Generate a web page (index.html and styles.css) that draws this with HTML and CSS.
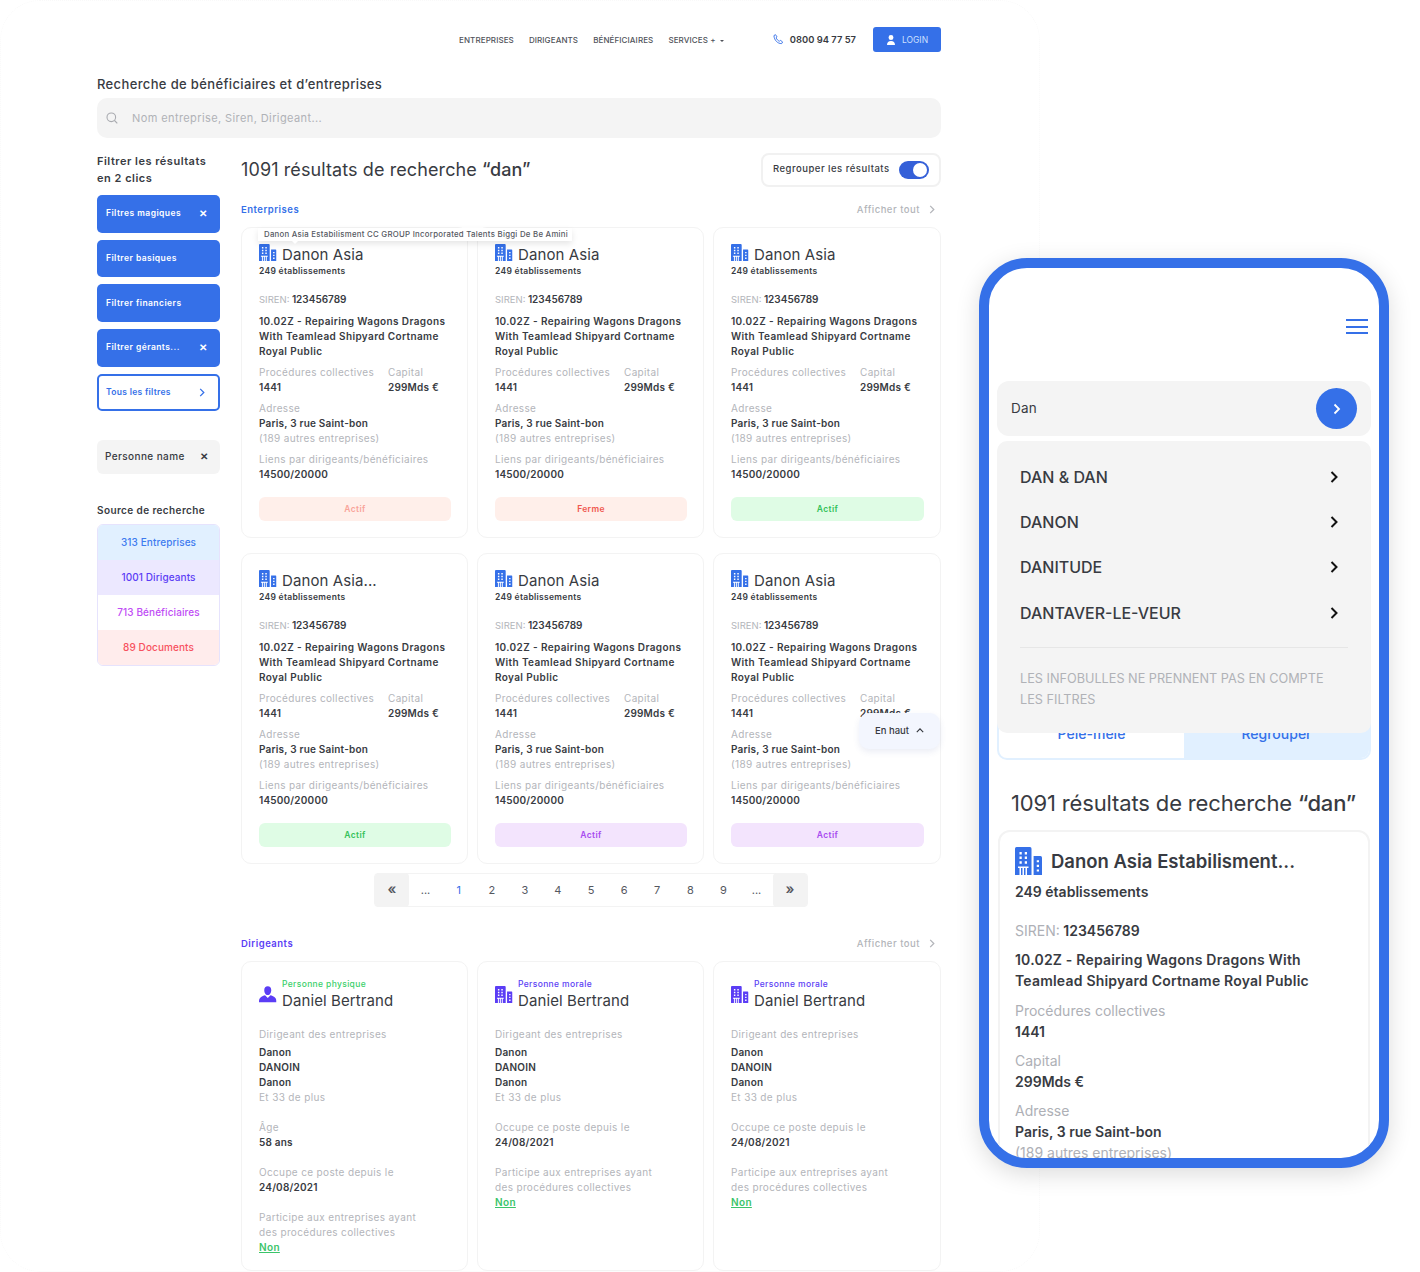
FILE: index.html
```html
<!DOCTYPE html>
<html lang="fr">
<head>
<meta charset="utf-8">
<title>Recherche de bénéficiaires et d'entreprises</title>
<link rel="stylesheet" href="styles.css">
</head>
<body>
<svg class="icon_defs" width="0" height="0">
	<symbol id="building" viewBox="0 0 18 17" preserveAspectRatio="none">
		<path fill="currentColor" d="M1 0h9a1 1 0 0 1 1 1v16H0V1a1 1 0 0 1 1-1zM12.400 5.500H17a1 1 0 0 1 1 1V17h-5.600z"/>
		<path fill="#fff" d="M3 3h1.500v1.500H3zM6.500 3H8v1.500H6.500zM3 5.800h1.500v1.500H3zM6.500 5.800H8v1.500H6.500zM3 8.600h1.500v1.500H3zM6.500 8.600H8v1.500H6.500zM2 11.800h7v1H8V17H7v-4.200H6V17H5v-4.200H4V17H3v-4.200H2zM14.500 8H16v1.300h-1.500zM14.500 10.800H16v1.300h-1.500zM14.500 13.600H16v1.300h-1.500z"/>
	</symbol>
	<symbol id="person" viewBox="0 0 18 17">
		<path fill="currentColor" d="M9 0c2.300 0 3.600 1.700 3.600 4 0 2.200-1.300 5-3.600 5S5.400 6.200 5.400 4C5.400 1.700 6.700 0 9 0zM6.200 9.200 9 12l2.800-2.800c3 .8 5.700 2 6.200 5.800v1.500H0V15c.5-3.800 3.200-5 6.200-5.800z"/>
	</symbol>
</svg>

<div class="frame_line"></div>

<div class="page">
	<div class="desktop">
		<div class="topbar">
			<a class="nav_link">Entreprises</a>
			<a class="nav_link">Dirigeants</a>
			<a class="nav_link">Bénéficiaires</a>
			<a class="nav_link">Services + <span class="caret"></span></a>
			<svg class="phone_icon" viewBox="0 0 12 12"><path fill="none" stroke="#3570e8" stroke-width="1" d="M1 1.800 2.700.7l1.700 2.500-1 1c.6 1.600 2 3 3.700 3.700l1-1 2.400 1.800-1.100 1.800C5 10.500 1.500 7 1 1.800z"/></svg>
			<span class="phone_nb">0800 94 77 57</span>
			<a class="login_bt">
				<svg viewBox="0 0 10 10" width="10" height="10"><path fill="#fff" d="M5 0a2.400 2.400 0 0 1 2.400 2.500A2.400 2.400 0 0 1 5 5a2.400 2.400 0 0 1-2.400-2.500A2.400 2.400 0 0 1 5 0zM1 10c0-2.500 1.500-4 4-4s4 1.500 4 4z"/></svg>
				Login
			</a>
		</div>

		<h1 class="page_title">Recherche de bénéficiaires et d’entreprises</h1>
		<div class="searchbar">
			<svg viewBox="0 0 12 12" width="12" height="12"><circle cx="5.300" cy="5.300" r="4.300" fill="none" stroke="#a9abb0" stroke-width="1.100"/><path d="m8.500 8.500 2.800 2.800" stroke="#a9abb0" stroke-width="1.100"/></svg>
			<span>Nom entreprise, Siren, Dirigeant...</span>
		</div>

		<div class="columns">
			<div class="sidebar">
				<h3 class="filter_title">Filtrer les résultats<br>en 2 clics</h3>
				<div class="filter_list">
					<a class="filter_bt">Filtres magiques <span class="cross">✕</span></a>
					<a class="filter_bt">Filtrer basiques</a>
					<a class="filter_bt">Filtrer financiers</a>
					<a class="filter_bt">Filtrer gérants... <span class="cross">✕</span></a>
					<a class="filter_bt filter_all">Tous les filtres <svg class="chev" viewBox="0 0 6 10"><path d="m1 1 4 4-4 4"/></svg></a>
				</div>
				<div class="person_chip">Personne name <span class="cross">✕</span></div>
				<h4 class="source_title">Source de recherche</h4>
				<div class="source_list">
					<div class="source source_blue">313 Entreprises</div>
					<div class="source source_violet">1001 Dirigeants</div>
					<div class="source source_pink">713 Bénéficiaires</div>
					<div class="source source_red">89 Documents</div>
				</div>
			</div>

			<div class="results">
				<div class="results_head">
					<h2 class="results_title">1091 résultats de recherche <b>“dan”</b></h2>
					<div class="group_toggle"><span class="group_label">Regrouper les résultats</span> <span class="switch"></span></div>
				</div>

				<div class="section_head">
					<span class="section_name">Enterprises</span>
					<a class="show_all">Afficher tout <svg class="chev" viewBox="0 0 6 10"><path d="m1 1 4 4-4 4"/></svg></a>
				</div>
				<div class="card_grid">
					<div class="card">
						<div class="tooltip">Danon Asia Estabilisment CC GROUP Incorporated Talents Biggi De Be Amini</div>
						<div class="card_head"><svg class="bld"><use href="#building"/></svg><span class="card_name">Danon Asia</span></div>
						<div class="card_sub">249 établissements</div>
						<div class="siren"><span class="lab">SIREN:</span> 123456789</div>
						<div class="activity">10.02Z - Repairing Wagons Dragons With Teamlead Shipyard Cortname Royal Public</div>
						<div class="pair"><div class="col1"><div class="lab">Procédures collectives</div><div class="val">1441</div></div><div><div class="lab">Capital</div><div class="val">299Mds €</div></div></div>
						<div class="block"><div class="lab">Adresse</div><div class="val">Paris, 3 rue Saint-bon</div><div class="lab">(189 autres entreprises)</div></div>
						<div class="block"><div class="lab">Liens par dirigeants/bénéficiaires</div><div class="val">14500/20000</div></div>
						<div class="badge badge_soft">Actif</div>
					</div>
					<div class="card">
						<div class="card_head"><svg class="bld"><use href="#building"/></svg><span class="card_name">Danon Asia</span></div>
						<div class="card_sub">249 établissements</div>
						<div class="siren"><span class="lab">SIREN:</span> 123456789</div>
						<div class="activity">10.02Z - Repairing Wagons Dragons With Teamlead Shipyard Cortname Royal Public</div>
						<div class="pair"><div class="col1"><div class="lab">Procédures collectives</div><div class="val">1441</div></div><div><div class="lab">Capital</div><div class="val">299Mds €</div></div></div>
						<div class="block"><div class="lab">Adresse</div><div class="val">Paris, 3 rue Saint-bon</div><div class="lab">(189 autres entreprises)</div></div>
						<div class="block"><div class="lab">Liens par dirigeants/bénéficiaires</div><div class="val">14500/20000</div></div>
						<div class="badge badge_red">Ferme</div>
					</div>
					<div class="card">
						<div class="card_head"><svg class="bld"><use href="#building"/></svg><span class="card_name">Danon Asia</span></div>
						<div class="card_sub">249 établissements</div>
						<div class="siren"><span class="lab">SIREN:</span> 123456789</div>
						<div class="activity">10.02Z - Repairing Wagons Dragons With Teamlead Shipyard Cortname Royal Public</div>
						<div class="pair"><div class="col1"><div class="lab">Procédures collectives</div><div class="val">1441</div></div><div><div class="lab">Capital</div><div class="val">299Mds €</div></div></div>
						<div class="block"><div class="lab">Adresse</div><div class="val">Paris, 3 rue Saint-bon</div><div class="lab">(189 autres entreprises)</div></div>
						<div class="block"><div class="lab">Liens par dirigeants/bénéficiaires</div><div class="val">14500/20000</div></div>
						<div class="badge badge_green">Actif</div>
					</div>
					<div class="card">
						<div class="card_head"><svg class="bld"><use href="#building"/></svg><span class="card_name">Danon Asia...</span></div>
						<div class="card_sub">249 établissements</div>
						<div class="siren"><span class="lab">SIREN:</span> 123456789</div>
						<div class="activity">10.02Z - Repairing Wagons Dragons With Teamlead Shipyard Cortname Royal Public</div>
						<div class="pair"><div class="col1"><div class="lab">Procédures collectives</div><div class="val">1441</div></div><div><div class="lab">Capital</div><div class="val">299Mds €</div></div></div>
						<div class="block"><div class="lab">Adresse</div><div class="val">Paris, 3 rue Saint-bon</div><div class="lab">(189 autres entreprises)</div></div>
						<div class="block"><div class="lab">Liens par dirigeants/bénéficiaires</div><div class="val">14500/20000</div></div>
						<div class="badge badge_green">Actif</div>
					</div>
					<div class="card">
						<div class="card_head"><svg class="bld"><use href="#building"/></svg><span class="card_name">Danon Asia</span></div>
						<div class="card_sub">249 établissements</div>
						<div class="siren"><span class="lab">SIREN:</span> 123456789</div>
						<div class="activity">10.02Z - Repairing Wagons Dragons With Teamlead Shipyard Cortname Royal Public</div>
						<div class="pair"><div class="col1"><div class="lab">Procédures collectives</div><div class="val">1441</div></div><div><div class="lab">Capital</div><div class="val">299Mds €</div></div></div>
						<div class="block"><div class="lab">Adresse</div><div class="val">Paris, 3 rue Saint-bon</div><div class="lab">(189 autres entreprises)</div></div>
						<div class="block"><div class="lab">Liens par dirigeants/bénéficiaires</div><div class="val">14500/20000</div></div>
						<div class="badge badge_violet">Actif</div>
					</div>
					<div class="card">
						<div class="up_bt">En haut <svg viewBox="0 0 10 6" width="8" height="5"><path d="m1 5 4-4 4 4" fill="none" stroke="#33363d" stroke-width="1.400"/></svg></div>
						<div class="card_head"><svg class="bld"><use href="#building"/></svg><span class="card_name">Danon Asia</span></div>
						<div class="card_sub">249 établissements</div>
						<div class="siren"><span class="lab">SIREN:</span> 123456789</div>
						<div class="activity">10.02Z - Repairing Wagons Dragons With Teamlead Shipyard Cortname Royal Public</div>
						<div class="pair"><div class="col1"><div class="lab">Procédures collectives</div><div class="val">1441</div></div><div><div class="lab">Capital</div><div class="val">299Mds €</div></div></div>
						<div class="block"><div class="lab">Adresse</div><div class="val">Paris, 3 rue Saint-bon</div><div class="lab">(189 autres entreprises)</div></div>
						<div class="block"><div class="lab">Liens par dirigeants/bénéficiaires</div><div class="val">14500/20000</div></div>
						<div class="badge badge_violet">Actif</div>
					</div>
				</div>

				<div class="pager">
					<span class="pg_end">«</span>
					<span class="pg">...</span><span class="pg pg_on">1</span><span class="pg">2</span><span class="pg">3</span><span class="pg">4</span><span class="pg">5</span><span class="pg">6</span><span class="pg">7</span><span class="pg">8</span><span class="pg">9</span><span class="pg">...</span>
					<span class="pg_end">»</span>
				</div>

				<div class="section_head section_second">
					<span class="section_name section_violet">Dirigeants</span>
					<a class="show_all">Afficher tout <svg class="chev" viewBox="0 0 6 10"><path d="m1 1 4 4-4 4"/></svg></a>
				</div>
				<div class="card_grid">
					<div class="card card_person">
						<div class="person_head"><svg class="bld bld_violet"><use href="#person"/></svg><div><div class="kind kind_green">Personne physique</div><div class="card_name">Daniel Bertrand</div></div></div>
						<div class="pblock"><div class="lab">Dirigeant des entreprises</div><div class="val val_first">Danon</div><div class="val">DANOIN</div><div class="val">Danon</div><div class="lab">Et 33 de plus</div></div>
						<div class="pblock"><div class="lab">Âge</div><div class="val">58 ans</div></div>
						<div class="pblock"><div class="lab">Occupe ce poste depuis le</div><div class="val">24/08/2021</div></div>
						<div class="pblock"><div class="lab">Participe aux entreprises ayant<br>des procédures collectives</div><a class="non">Non</a></div>
					</div>
					<div class="card card_person">
						<div class="person_head"><svg class="bld bld_violet"><use href="#building"/></svg><div><div class="kind">Personne morale</div><div class="card_name">Daniel Bertrand</div></div></div>
						<div class="pblock"><div class="lab">Dirigeant des entreprises</div><div class="val val_first">Danon</div><div class="val">DANOIN</div><div class="val">Danon</div><div class="lab">Et 33 de plus</div></div>
						<div class="pblock"><div class="lab">Occupe ce poste depuis le</div><div class="val">24/08/2021</div></div>
						<div class="pblock"><div class="lab">Participe aux entreprises ayant<br>des procédures collectives</div><a class="non">Non</a></div>
					</div>
					<div class="card card_person">
						<div class="person_head"><svg class="bld bld_violet"><use href="#building"/></svg><div><div class="kind">Personne morale</div><div class="card_name">Daniel Bertrand</div></div></div>
						<div class="pblock"><div class="lab">Dirigeant des entreprises</div><div class="val val_first">Danon</div><div class="val">DANOIN</div><div class="val">Danon</div><div class="lab">Et 33 de plus</div></div>
						<div class="pblock"><div class="lab">Occupe ce poste depuis le</div><div class="val">24/08/2021</div></div>
						<div class="pblock"><div class="lab">Participe aux entreprises ayant<br>des procédures collectives</div><a class="non">Non</a></div>
					</div>
				</div>
			</div>
		</div>
	</div>

	<div class="phone">
		<div class="phone_screen">
			<div class="burger"><i></i><i></i><i></i></div>
			<div class="m_search"><span class="m_query">Dan</span> <span class="m_go"><svg viewBox="0 0 8 12" width="8" height="12"><path d="m1.500 1.500 4.500 4.500-4.500 4.500" fill="none" stroke="#fff" stroke-width="1.800"/></svg></span></div>
			<div class="m_lower">
				<div class="m_drop">
					<div class="m_item">DAN &amp; DAN <svg class="m_chev" viewBox="0 0 8 12"><path d="m1.500 1 5 5-5 5"/></svg></div>
					<div class="m_item">DANON <svg class="m_chev" viewBox="0 0 8 12"><path d="m1.500 1 5 5-5 5"/></svg></div>
					<div class="m_item">DANITUDE <svg class="m_chev" viewBox="0 0 8 12"><path d="m1.500 1 5 5-5 5"/></svg></div>
					<div class="m_item">DANTAVER-LE-VEUR <svg class="m_chev" viewBox="0 0 8 12"><path d="m1.500 1 5 5-5 5"/></svg></div>
					<div class="m_note">LES INFOBULLES NE PRENNENT PAS EN COMPTE LES FILTRES</div>
				</div>
				<div class="m_tabs"><span class="m_tab">Pêle-mêle</span><span class="m_tab m_tab_on">Regrouper</span></div>
				<h2 class="m_title">1091 résultats de recherche <b>“dan”</b></h2>
				<div class="m_card">
					<div class="m_head"><svg class="m_bld"><use href="#building"/></svg><span>Danon Asia Estabilisment...</span></div>
					<div class="m_sub">249 établissements</div>
					<div class="m_siren"><span class="m_lab">SIREN:</span> 123456789</div>
					<div class="m_act">10.02Z - Repairing Wagons Dragons With Teamlead Shipyard Cortname Royal Public</div>
					<div class="m_block"><div class="m_lab">Procédures collectives</div><div>1441</div></div>
					<div class="m_block"><div class="m_lab">Capital</div><div>299Mds €</div></div>
					<div class="m_block"><div class="m_lab">Adresse</div><div>Paris, 3 rue Saint-bon</div><div class="m_lab">(189 autres entreprises)</div></div>
				</div>
			</div>
		</div>
	</div>
</div>
</body>
</html>
```
FILE: styles.css
```css
* {
	box-sizing: border-box;
}
body {
	margin: 0;
	background: #fff;
	color: #383b42;
	font-family: "Inter", "Noto Sans", sans-serif;
	font-size: 10px;
	overflow: hidden;
}
h1, h2, h3, h4 {
	margin: 0;
}
.icon_defs {
	position: absolute;
}
.frame_line {
	position: absolute;
	left: 0;
	top: 0;
	width: 1040px;
	height: 1272px;
	border: 1px dotted #f9f9f9;
	border-radius: 40px;
}
.page {
	position: relative;
	display: flex;
	width: 1420px;
	height: 1272px;
	padding-left: 97px;
	overflow: hidden;
}
.desktop {
	width: 844px;
	flex: none;
}

/* header */
.topbar {
	display: flex;
	align-items: center;
	justify-content: flex-end;
	height: 25px;
	margin-top: 27px;
}
.nav_link {
	margin-right: 15px;
	font-size: 8px;
	font-weight: 500;
	letter-spacing: 0.1px;
	color: #50535a;
	text-transform: uppercase;
}
.nav_link:nth-child(4) {
	margin-right: 49px;
}
.caret {
	display: inline-block;
	margin-left: 2px;
	vertical-align: 1px;
	border: 2.500px solid transparent;
	border-top-color: #50535a;
	border-bottom: 0;
}
.phone_icon {
	width: 11px;
	height: 11px;
	margin-right: 6px;
}
.phone_nb {
	margin-right: 17px;
	font-size: 9.400px;
	font-weight: 600;
}
.login_bt {
	display: flex;
	align-items: center;
	justify-content: center;
	gap: 6px;
	width: 68px;
	height: 25px;
	border-radius: 3px;
	background: #3570e8;
	color: #cfe0ff;
	font-size: 8.500px;
	text-transform: uppercase;
}
.page_title {
	margin-top: 24px;
	font-size: 13px;
	font-weight: 500;
	line-height: 16px;
	letter-spacing: 0.360px;
}
.searchbar {
	display: flex;
	align-items: center;
	gap: 14px;
	height: 40px;
	margin-top: 6px;
	padding-left: 9px;
	border-radius: 10px;
	background: #f4f4f4;
	color: #b0b2b7;
	font-size: 11px;
	letter-spacing: 0.400px;
}
.columns {
	display: flex;
	gap: 21px;
	margin-top: 15px;
}

/* sidebar */
.sidebar {
	width: 123px;
	flex: none;
}
.filter_title {
	font-size: 11px;
	font-weight: 600;
	line-height: 17px;
	letter-spacing: 0.500px;
}
.filter_list {
	display: flex;
	flex-direction: column;
	gap: 7.200px;
	margin-top: 8px;
}
.filter_bt {
	display: flex;
	align-items: center;
	justify-content: space-between;
	height: 37.500px;
	padding: 0 13px 1px 9px;
	border-radius: 5px;
	background: #3570e8;
	color: #fff;
	font-size: 8.500px;
	font-weight: 600;
	letter-spacing: 0.450px;
}
.filter_bt .cross {
	color: #fff;
}
.cross {
	font-size: 10px;
	font-weight: 600;
}
.filter_all {
	border: 2px solid #3570e8;
	background: #fff;
	color: #3570e8;
	padding-left: 7px;
	letter-spacing: 0.300px;
}
.chev {
	width: 6px;
	height: 9px;
	fill: none;
	stroke: currentColor;
	stroke-width: 1.400;
}
.person_chip {
	display: flex;
	align-items: center;
	justify-content: space-between;
	height: 34px;
	margin-top: 29px;
	padding: 0 12px 2px 8px;
	border-radius: 6px;
	background: #f4f4f4;
	font-size: 10px;
	font-weight: 500;
	letter-spacing: 0.400px;
}
.source_title {
	margin-top: 29px;
	font-size: 10px;
	font-weight: 600;
	line-height: 14px;
	letter-spacing: 0.400px;
}
.source_list {
	margin-top: 7px;
	border: 1px solid #e6e3fd;
	border-radius: 6px;
	overflow: hidden;
}
.source {
	height: 35px;
	line-height: 34px;
	text-align: center;
	font-size: 10px;
	font-weight: 500;
	letter-spacing: 0.100px;
}
.source_blue {
	background: #e1f0ff;
	color: #3d7bef;
}
.source_violet {
	background: #ece8ff;
	color: #5b3df5;
}
.source_pink {
	background: #fff;
	color: #c04cf5;
}
.source_red {
	background: #ffecec;
	color: #f7525f;
}

/* results */
.results {
	flex: 1;
}
.results_head {
	display: flex;
	align-items: center;
	justify-content: space-between;
	height: 34px;
}
.results_title {
	padding-bottom: 2px;
	font-size: 18px;
	font-weight: 400;
	letter-spacing: 0.100px;
}
.results_title b {
	font-weight: 500;
}
.group_toggle {
	display: flex;
	align-items: center;
	justify-content: space-between;
	width: 180px;
	height: 34px;
	padding: 0 10px;
	border: 2px solid #f1f1f1;
	border-radius: 8px;
	font-size: 9.500px;
	font-weight: 500;
	letter-spacing: 0.500px;
}
.group_label {
	margin-top: -3px;
}
.switch {
	position: relative;
	width: 30px;
	height: 18px;
	border-radius: 9px;
	background: #3560d8;
}
.switch::after {
	content: "";
	position: absolute;
	right: 2px;
	top: 2px;
	width: 14px;
	height: 14px;
	border-radius: 50%;
	background: #fff;
}
.section_head {
	display: flex;
	align-items: center;
	justify-content: space-between;
	height: 15px;
	margin-top: 15px;
}
.section_second {
	margin-top: 29px;
}
.section_name {
	color: #3570e8;
	font-size: 9.500px;
	font-weight: 600;
	letter-spacing: 0.500px;
}
.section_violet {
	color: #5b3df5;
}
.show_all {
	display: flex;
	align-items: center;
	gap: 9px;
	padding-right: 6px;
	color: #b3b5ba;
	font-size: 9.500px;
	font-weight: 500;
	letter-spacing: 0.500px;
}
.card_grid {
	display: grid;
	grid-template-columns: 227px 227px 228px;
	gap: 15px 9px;
	margin-top: 10px;
}
.card {
	position: relative;
	height: 311px;
	padding: 16px 16px 0 17px;
	border: 1px solid #f3f3f3;
	border-radius: 10px;
	background: #fff;
	font-size: 10px;
	line-height: 15px;
	letter-spacing: 0.350px;
}
.card_person {
	height: 310px;
}
.card_head {
	display: flex;
	gap: 5.500px;
	height: 20px;
}
.bld {
	width: 17.500px;
	height: 17px;
	flex: none;
	color: #3570e8;
}
.bld_violet {
	color: #5b3df5;
	margin-top: 8px;
}
.card_name {
	padding-top: 1px;
	font-size: 15px;
	line-height: 20px;
	letter-spacing: 0.100px;
}
.card_sub {
	font-size: 8.500px;
	font-weight: 600;
	line-height: 14px;
	letter-spacing: 0.300px;
}
.siren {
	margin-top: 14px;
	font-weight: 600;
	letter-spacing: 0;
}
.lab {
	color: #b3b5ba;
	font-weight: 400;
}
.siren .lab {
	font-size: 9.500px;
}
.val {
	font-weight: 600;
	letter-spacing: 0.200px;
}
.activity {
	margin-top: 7px;
	font-weight: 600;
	letter-spacing: 0.380px;
}
.pair {
	display: flex;
	margin-top: 6px;
}
.col1 {
	width: 129px;
}
.block {
	margin-top: 6px;
}
.badge {
	height: 24px;
	margin-top: 15px;
	border-radius: 6px;
	font-size: 8.500px;
	font-weight: 600;
	line-height: 24px;
	text-align: center;
}
.badge_soft {
	background: #ffefea;
	color: #f9a49a;
}
.badge_red {
	background: #ffefea;
	color: #f0584f;
}
.badge_green {
	background: #dffce5;
	color: #35c25b;
}
.badge_violet {
	background: #f3e4fd;
	color: #a84cf0;
}
.tooltip {
	position: absolute;
	left: 16px;
	top: 0;
	width: 314px;
	height: 13px;
	padding-left: 6px;
	background: #fff;
	box-shadow: 0 3px 6px rgba(0, 0, 0, .1);
	color: #55585f;
	font-size: 7.800px;
	font-weight: 500;
	line-height: 13px;
	letter-spacing: 0.270px;
	white-space: nowrap;
	z-index: 2;
}
.tooltip::after {
	content: "";
	position: absolute;
	left: 34px;
	top: 13px;
	border: 3px solid transparent;
	border-top-color: #fff;
	border-bottom: 0;
}
.up_bt {
	position: absolute;
	right: 0;
	top: 159px;
	display: flex;
	align-items: center;
	justify-content: center;
	gap: 7px;
	width: 81px;
	height: 36px;
	padding-bottom: 2px;
	border-radius: 10px;
	background: #f3f6fe;
	box-shadow: 0 3px 6px rgba(60, 80, 160, .1);
	font-size: 9.500px;
	font-weight: 500;
	letter-spacing: 0;
	z-index: 2;
}

/* pagination */
.pager {
	display: flex;
	align-items: center;
	width: 434px;
	height: 34px;
	margin: 9px 0 0 133px;
	border: 1px solid #f3f3f3;
	border-radius: 4px;
	color: #55585f;
}
.pg {
	width: 33.200px;
	text-align: center;
	font-size: 11px;
}
.pg_on {
	color: #3570e8;
}
.pg_end {
	width: 34px;
	height: 34px;
	flex: none;
	border-radius: 4px;
	background: #f3f3f3;
	font-size: 14px;
	font-weight: 600;
	line-height: 32px;
	text-align: center;
}

/* dirigeants */
.person_head {
	display: flex;
	gap: 5.500px;
	height: 34px;
}
.kind {
	color: #5b3df5;
	font-size: 8.500px;
	font-weight: 500;
	line-height: 12px;
	letter-spacing: 0.350px;
}
.kind_green {
	color: #3ad06a;
}
.person_head .card_name {
	padding-top: 0;
	line-height: 22px;
}
.pblock {
	margin-top: 15px;
}
.val_first {
	margin-top: 3px;
}
.non {
	color: #3bc46a;
	font-weight: 600;
	text-decoration: underline;
}

/* mobile */
.phone {
	width: 410px;
	height: 910px;
	flex: none;
	margin: 258px 0 0 38px;
	border: 10px solid #3570e8;
	border-radius: 48px;
	background: #fff;
	box-shadow: 0 6px 24px rgba(0, 0, 0, .14);
	overflow: hidden;
}
.phone_screen {
	height: 100%;
	padding: 51px 8px 0;
	overflow: hidden;
}
.burger {
	display: flex;
	flex-direction: column;
	gap: 4.500px;
	width: 22px;
	margin-left: auto;
	margin-right: 3px;
}
.burger i {
	height: 2px;
	background: #3570e8;
}
.m_search {
	display: flex;
	align-items: center;
	justify-content: space-between;
	height: 55px;
	margin-top: 47px;
	padding: 0 14px;
	border-radius: 12px;
	background: #f4f4f4;
	font-size: 13.500px;
	letter-spacing: 0.200px;
}
.m_query {
	margin-top: -2px;
}
.m_go {
	display: flex;
	align-items: center;
	justify-content: center;
	width: 41px;
	height: 41px;
	border-radius: 50%;
	background: #3570e8;
}
.m_lower {
	position: relative;
	display: flow-root;
}
.m_drop {
	position: absolute;
	left: 0;
	right: 0;
	top: 5px;
	height: 292px;
	padding: 13px 23px 0;
	border-radius: 10px;
	background: #f4f4f4;
	z-index: 2;
}
.m_item {
	display: flex;
	align-items: center;
	justify-content: space-between;
	height: 45.400px;
	padding-right: 10px;
	font-size: 16px;
	font-weight: 500;
}
.m_chev {
	width: 8px;
	height: 12px;
	fill: none;
	stroke: #111;
	stroke-width: 2;
}
.m_note {
	margin-top: 11px;
	padding-top: 20px;
	border-top: 1px solid #e6e6e6;
	color: #b0b2b7;
	font-size: 12.700px;
	line-height: 21px;
}
.m_tabs {
	display: flex;
	height: 56px;
	margin-top: 268px;
	border: 2px solid #e1f0ff;
	border-radius: 0 0 10px 10px;
	overflow: hidden;
}
.m_tab {
	flex: 1;
	padding-top: 17px;
	text-align: center;
	color: #3570e8;
	font-size: 14px;
	font-weight: 500;
	line-height: 22px;
}
.m_tab_on {
	background: #e1f0ff;
}
.m_title {
	margin-top: 28px;
	padding-left: 14px;
	font-size: 22px;
	font-weight: 400;
	line-height: 30px;
	letter-spacing: -0.150px;
	white-space: nowrap;
}
.m_title b {
	font-weight: 500;
}
.m_card {
	margin: 12px 1px 0;
	padding: 15px 15px 0;
	border: 2px solid #f3f3f3;
	border-radius: 12px;
	font-size: 14px;
	font-weight: 600;
	line-height: 21px;
}
.m_head {
	display: flex;
	align-items: center;
	gap: 9px;
	height: 28px;
	font-size: 18.500px;
}
.m_bld {
	width: 27px;
	height: 28px;
	color: #3570e8;
}
.m_sub {
	margin-top: 6px;
}
.m_siren {
	margin-top: 18px;
}
.m_lab {
	color: #aeb0b6;
	font-weight: 400;
}
.m_act {
	margin-top: 8px;
	letter-spacing: 0.200px;
}
.m_block {
	margin-top: 8px;
}
.m_act + .m_block {
	margin-top: 9px;
}
```
